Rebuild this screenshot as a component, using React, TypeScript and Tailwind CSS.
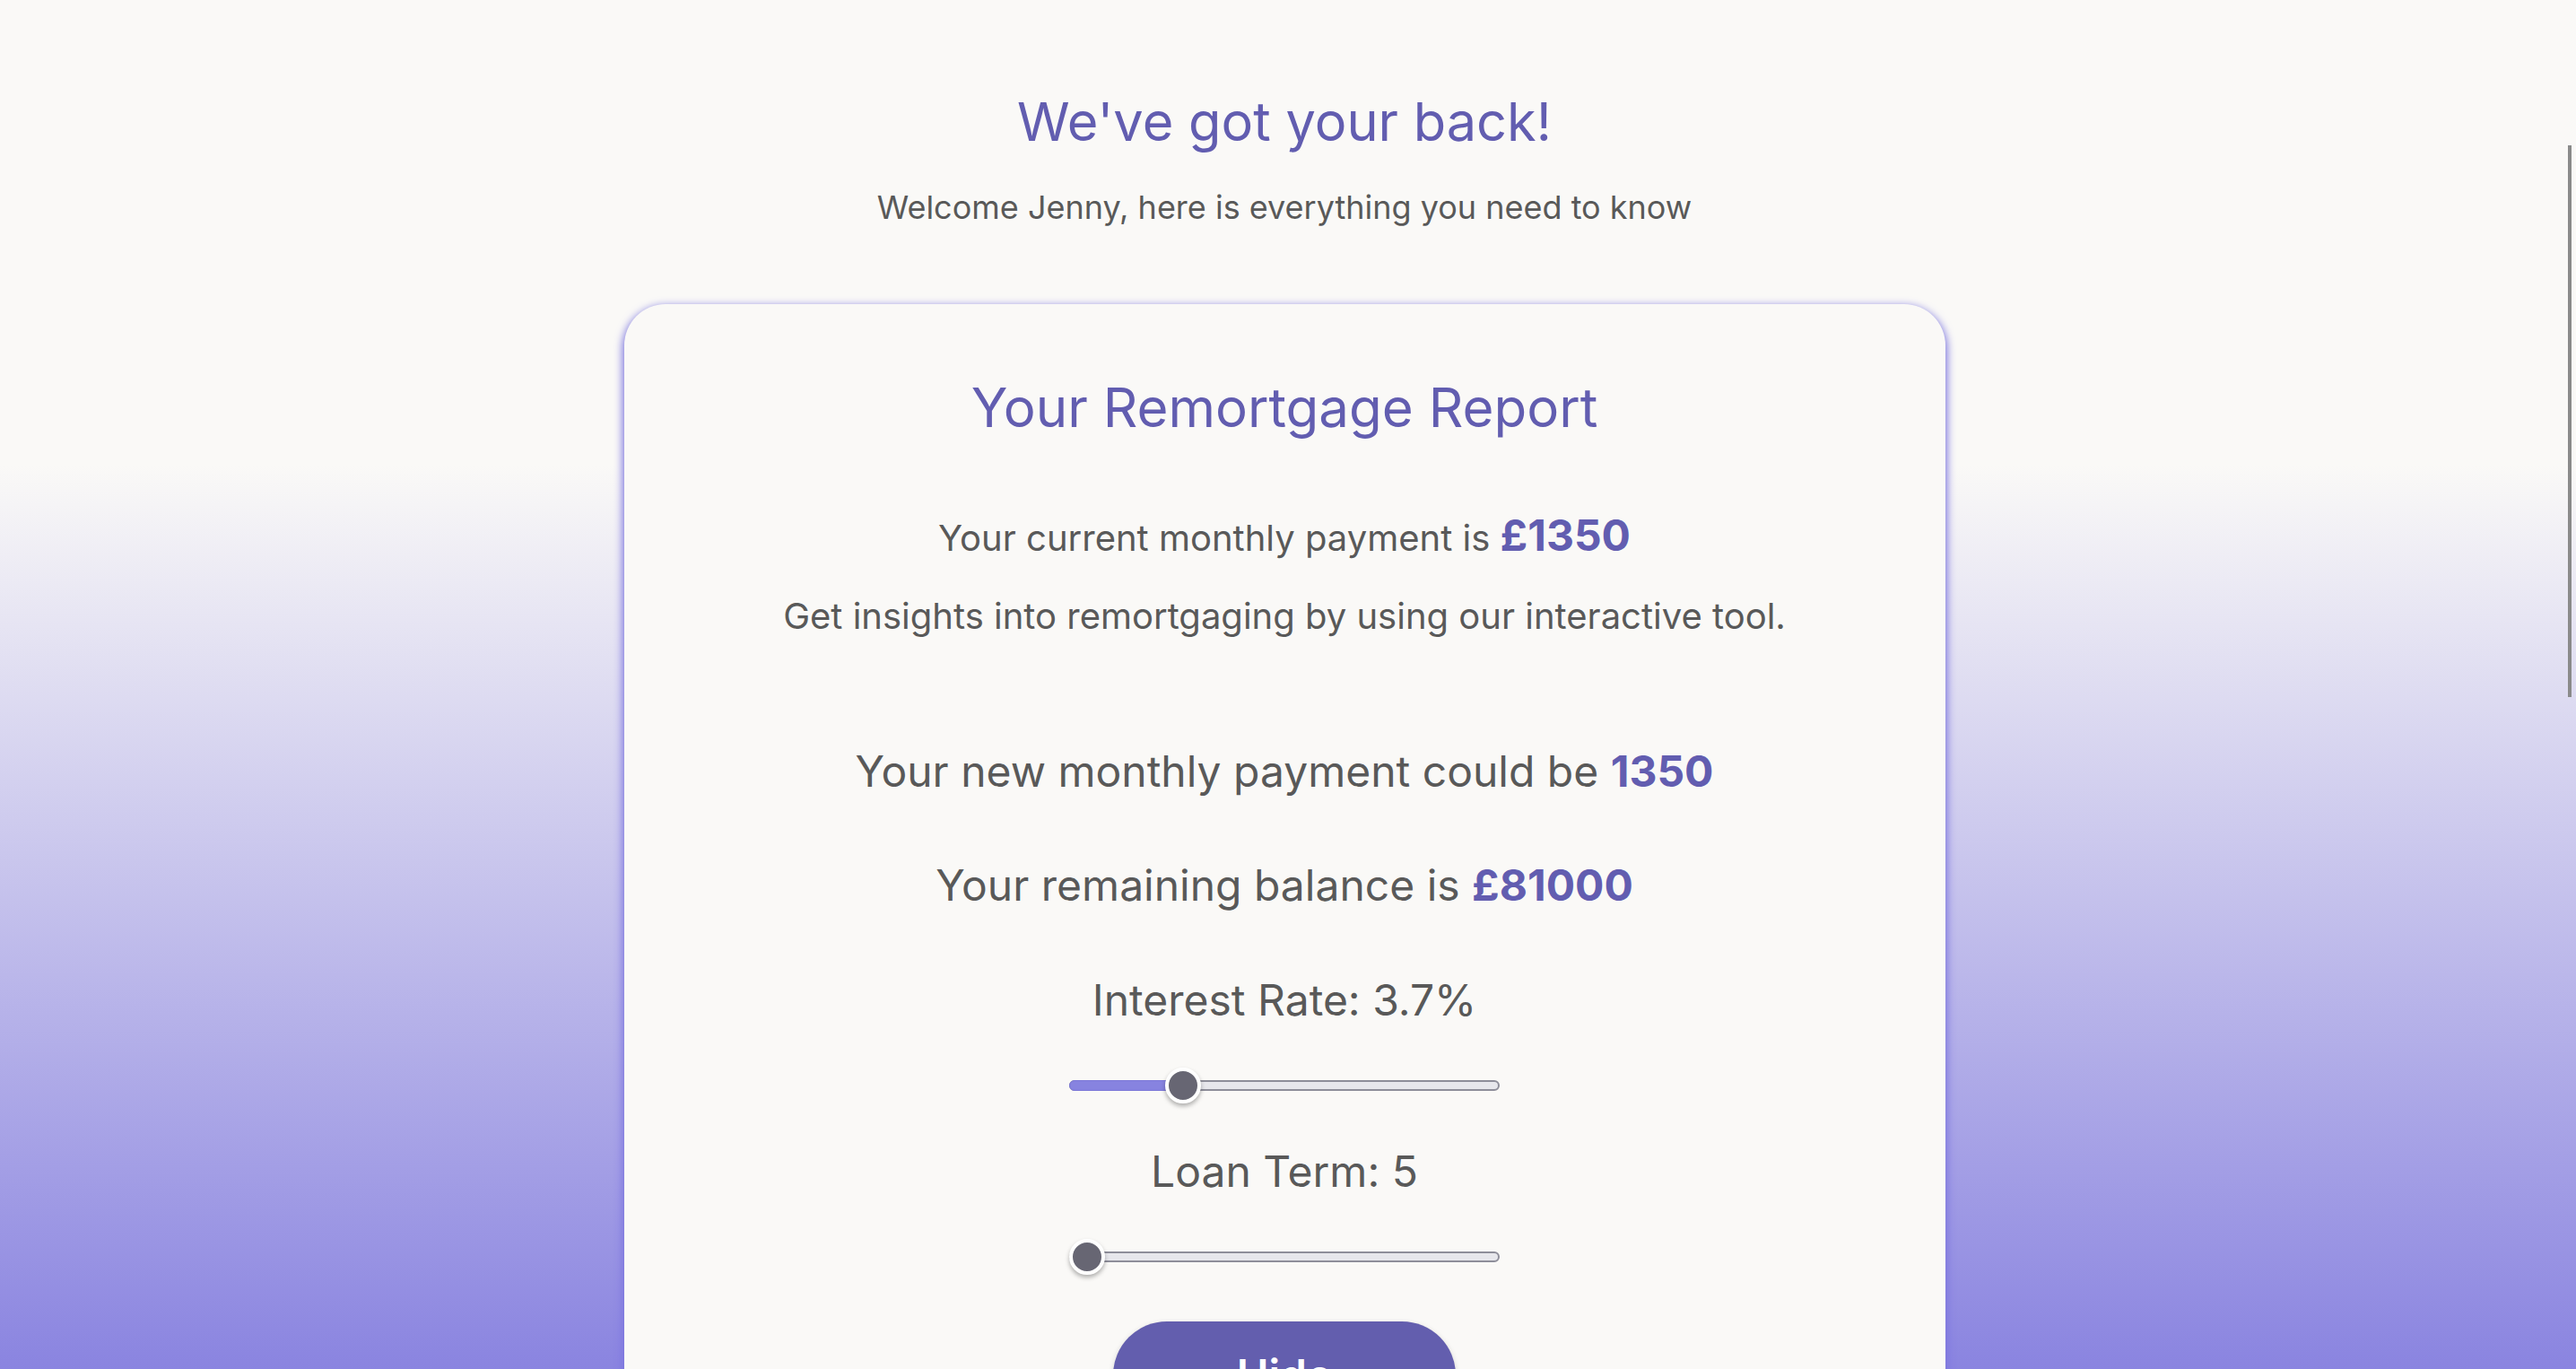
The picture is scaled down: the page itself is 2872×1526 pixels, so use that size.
import { useState } from "react";

function RangeBar({ pct, fill }: { pct: number; fill: boolean }) {
  // custom-looking range slider: track + thumb
  const left = `calc(${pct} * (100% - 40px))`;
  return (
    <div className="relative w-[480px] h-[40px] flex items-center">
      <div className="w-full h-[12px] rounded-full bg-[#e7e7ec] border-2 border-[#8e8e9a]" />
      {fill && (
        <div
          className="absolute left-0 h-[12px] rounded-full bg-[#8783e0] border border-[#7b77d8]"
          style={{ width: `calc(${pct} * (100% - 40px) + 20px)` }}
        />
      )}
      <div
        className="absolute top-0 w-[40px] h-[40px] rounded-full bg-[#676673] border-[4px] border-white shadow-[0_3px_5px_rgba(0,0,0,0.3)]"
        style={{ left }}
      />
    </div>
  );
}

export default function App() {
  const [rate] = useState(3.7);
  const [term] = useState(5);
  const current = 1350;
  const balance = 81000;

  return (
    <div className="h-screen overflow-hidden bg-[linear-gradient(to_bottom,#faf9f7_34%,#8a84e0_100%)] font-['Inter',sans-serif] text-[#595959]">
      <div className="flex flex-col items-center pr-[8px]">
        <h1 className="mt-[99px] text-[59.5px] leading-[72px] font-normal text-[#625db0]">We've got your back!</h1>
        <p className="mt-[38px] text-[36px] leading-[44px]">Welcome Jenny, here is everything you need to know</p>

        <div className="mt-[86px] w-[1473px] rounded-[46px] bg-[#faf9f7] shadow-[0_4px_10px_2px_#7a74de] flex flex-col items-center pb-[200px]">
          <h2 className="mt-[79px] text-[60px] leading-[72px] text-[#625db0]">Your Remortgage Report</h2>

          <p className="mt-[78px] text-[40px] leading-[58px]">
            Your current monthly payment is <span className="text-[48px] font-bold text-[#625db0]">£{current}</span>
          </p>
          <p className="mt-[34px] text-[40px] leading-[48px]">Get insights into remortgaging by using our interactive tool.</p>

          <p className="mt-[120px] text-[48px] leading-[58px]">
            Your new monthly payment could be <span className="font-bold text-[#625db0]">{current}</span>
          </p>
          <p className="mt-[69px] text-[48px] leading-[58px]">
            Your remaining balance is <span className="font-bold text-[#625db0]">£{balance}</span>
          </p>

          <p className="mt-[70px] text-[48px] leading-[58px]">Interest Rate: {rate}%</p>
          <div className="mt-[46px]">
            <RangeBar pct={0.243} fill />
          </div>

          <p className="mt-[47px] text-[48px] leading-[58px]">Loan Term: {term}</p>
          <div className="mt-[46px]">
            <RangeBar pct={0} fill={false} />
          </div>

          <button className="mt-[52px] w-[382px] h-[120px] rounded-[60px] bg-[#635eae] text-white text-[48px] font-semibold shadow-[0_2px_6px_rgba(0,0,0,0.15)]">
            Hide
          </button>
        </div>
      </div>

      {/* scrollbar thumb */}
      <div className="fixed right-[5px] top-[162px] w-[4px] h-[615px] bg-[#8a8a8a]" />
    </div>
  );
}
